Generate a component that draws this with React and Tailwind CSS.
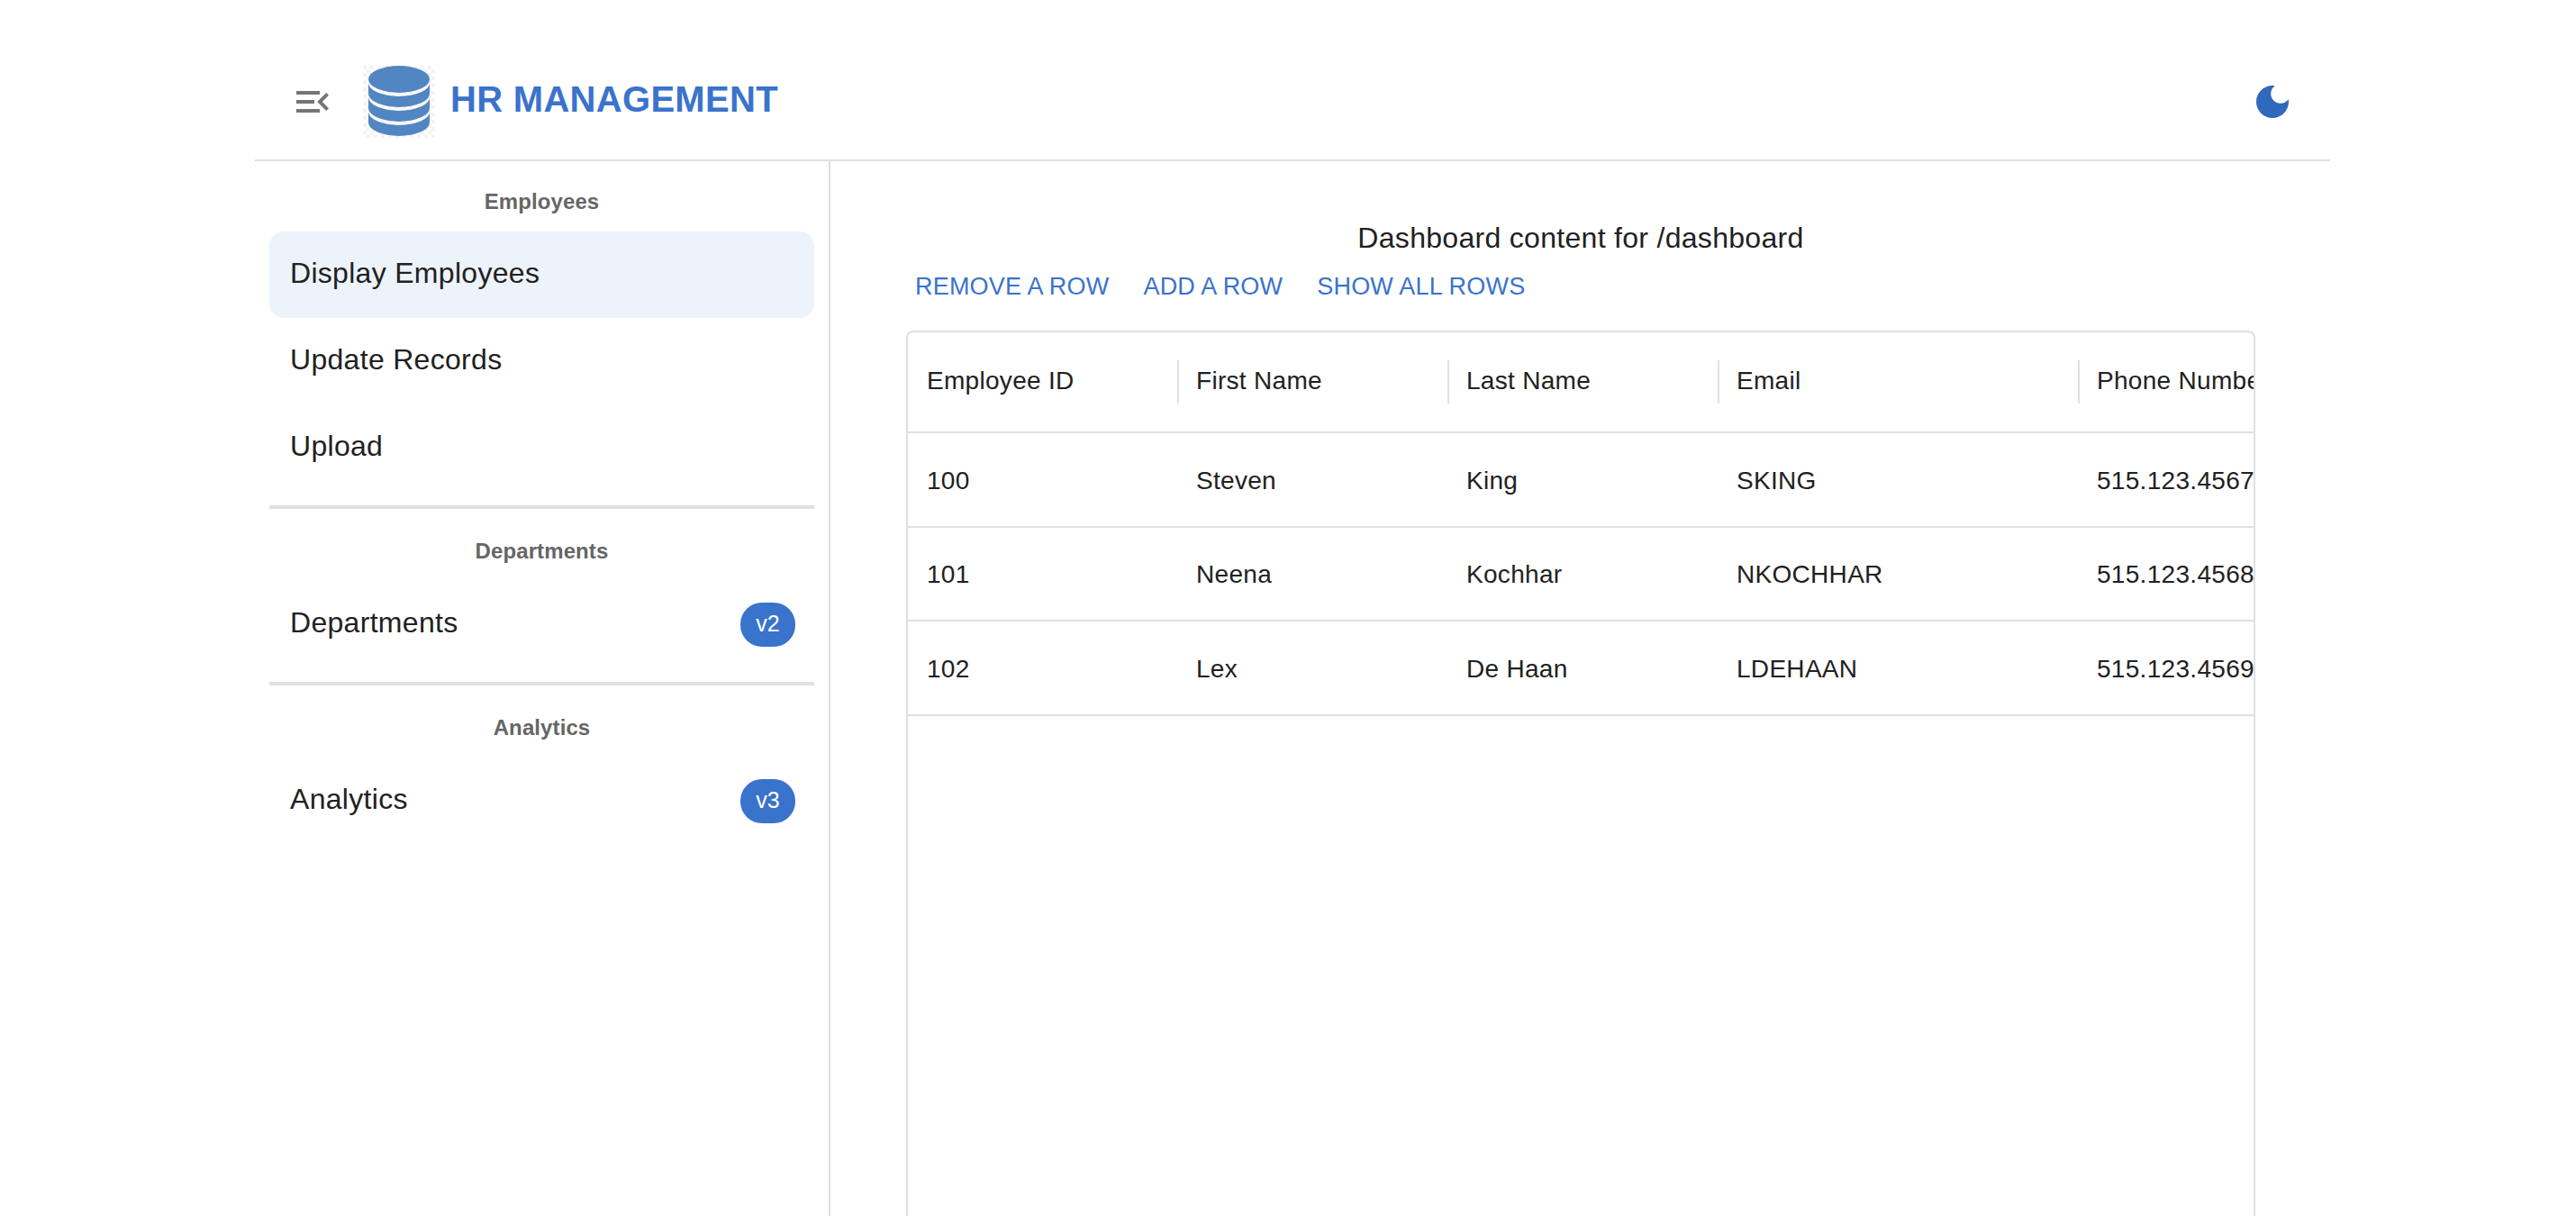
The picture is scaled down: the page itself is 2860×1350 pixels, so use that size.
import React from 'react';

const employees = [
  { id: 100, first: 'Steven', last: 'King', email: 'SKING', phone: '515.123.4567' },
  { id: 101, first: 'Neena', last: 'Kochhar', email: 'NKOCHHAR', phone: '515.123.4568' },
  { id: 102, first: 'Lex', last: 'De Haan', email: 'LDEHAAN', phone: '515.123.4569' },
];

function Logo() {
  const bands = [19, 35, 51];
  return (
    <svg width="80" height="80" viewBox="0 0 80 80" className="shrink-0">
      <defs>
        <pattern id="checker" width="8" height="8" patternUnits="userSpaceOnUse">
          <rect width="8" height="8" fill="#ffffff" />
          <rect width="4" height="4" fill="#f3f3f3" />
          <rect x="4" y="4" width="4" height="4" fill="#f3f3f3" />
        </pattern>
      </defs>
      <rect width="80" height="80" fill="url(#checker)" />
      <ellipse cx="40" cy="15" rx="34" ry="15" fill="#5286c2" />
      {bands.map(y => (
        <path
          key={y}
          d={`M6 ${y}A34 15 0 0 0 74 ${y}V${y + 12}A34 15 0 0 1 6 ${y + 12}Z`}
          fill="#5286c2"
        />
      ))}
    </svg>
  );
}

function Subheader({ children }) {
  return <div className="h-[50px] flex items-center justify-center text-[24px] font-bold tracking-[0.1px] text-[#666666]">{children}</div>;
}

function NavItem({ label, active, chip }) {
  return (
    <div className={`h-[96px] rounded-[16px] pl-[23px] pr-[21px] flex items-center justify-between text-[32px] tracking-[0.3px] text-[#212121] ${active ? 'bg-[#edf3fb]' : ''}`}>
      <span className="mb-[4px]">{label}</span>
      {chip && <span className="w-[61px] h-[49px] rounded-[24px] bg-[#3a73cc] text-white text-[25px] tracking-normal flex items-center justify-center">{chip}</span>}
    </div>
  );
}

export default function App() {
  return (
    <div className="h-screen overflow-hidden bg-white font-['Liberation_Sans',Arial,sans-serif]">
      <div className="w-[2304px] ml-[283px] h-full flex flex-col">
        <header className="h-[179px] shrink-0 border-b-[2px] border-[#e0e0e0] flex items-center pt-[48px] pr-[40px]">
          <svg width="48" height="48" viewBox="0 0 24 24" fill="#757575" className="ml-[40px] mr-[32px] shrink-0">
            <path d="M3 18h13v-2H3v2zm0-5h10v-2H3v2zm0-7v2h13V6H3zm18 9.59L17.42 12 21 8.41 19.59 7l-5 5 5 5L21 15.59z" />
          </svg>
          <Logo />
          <h1 className="ml-[17px] mb-[6px] text-[40px] font-bold tracking-[0.3px] text-[#3a73cc]">HR MANAGEMENT</h1>
          <svg width="48" height="48" viewBox="0 0 24 24" fill="#3068bc" className="ml-auto shrink-0">
            <path d="M12 3c-4.97 0-9 4.03-9 9s4.03 9 9 9 9-4.03 9-9c0-.46-.04-.92-.1-1.36-.98 1.37-2.58 2.26-4.4 2.26-2.98 0-5.4-2.42-5.4-5.4 0-1.81.89-3.42 2.26-4.4-.44-.06-.9-.1-1.36-.1z" />
          </svg>
        </header>
        <div className="flex flex-1 min-h-0">
          <aside className="w-[639px] shrink-0 border-r-[2px] border-[#e0e0e0] px-[16px] pt-[20px]">
            <Subheader>Employees</Subheader>
            <div className="mt-[8px]">
              <NavItem label="Display Employees" active />
              <NavItem label="Update Records" />
              <NavItem label="Upload" />
            </div>
            <div className="mt-[16px] h-[4px] bg-[#e0e0e0]" />
            <div className="mt-[22px]"><Subheader>Departments</Subheader></div>
            <div className="mt-[8px]"><NavItem label="Departments" chip="v2" /></div>
            <div className="mt-[16px] h-[4px] bg-[#e0e0e0]" />
            <div className="mt-[22px]"><Subheader>Analytics</Subheader></div>
            <div className="mt-[8px]"><NavItem label="Analytics" chip="v3" /></div>
          </aside>
          <main className="flex-1 min-w-0 pl-[84px] pr-[83px] pt-[62px] flex flex-col">
            <div className="text-center text-[32px] tracking-[0.3px] leading-[46px] text-[#212121]">Dashboard content for /dashboard</div>
            <div className="flex gap-[38px] mt-[8px] pl-[10px] text-[27px] leading-[46px] text-[#3a73cc] tracking-[0.2px]">
              <span>REMOVE A ROW</span>
              <span>ADD A ROW</span>
              <span>SHOW ALL ROWS</span>
            </div>
            <div className="mt-[26px] flex-1 border-[2px] border-b-0 border-[#e0e0e0] rounded-t-[8px] overflow-hidden text-[28px] tracking-[0.3px] text-[#212121]">
              <div className="flex h-[112px] border-b-[2px] border-[#e0e0e0] items-center">
                <div className="w-[299px] shrink-0 px-[21px] pb-[3px]">Employee ID</div>
                <div className="w-[300px] shrink-0 px-[19px] pb-[3px] border-l-[2px] border-[#e0e0e0] h-[48px] flex items-center">First Name</div>
                <div className="w-[300px] shrink-0 px-[19px] pb-[3px] border-l-[2px] border-[#e0e0e0] h-[48px] flex items-center">Last Name</div>
                <div className="w-[400px] shrink-0 px-[19px] pb-[3px] border-l-[2px] border-[#e0e0e0] h-[48px] flex items-center">Email</div>
                <div className="w-[300px] shrink-0 px-[19px] pb-[3px] border-l-[2px] border-[#e0e0e0] h-[48px] flex items-center whitespace-nowrap">Phone Number</div>
              </div>
              {employees.map(e => (
                <div key={e.id} className="flex h-[104.5px] pt-[3px] border-b-[2px] border-[#e0e0e0] items-center">
                  <div className="w-[299px] shrink-0 px-[21px]">{e.id}</div>
                  <div className="w-[300px] shrink-0 px-[21px]">{e.first}</div>
                  <div className="w-[300px] shrink-0 px-[21px]">{e.last}</div>
                  <div className="w-[400px] shrink-0 px-[21px]">{e.email}</div>
                  <div className="w-[300px] shrink-0 px-[21px] whitespace-nowrap">{e.phone}</div>
                </div>
              ))}
            </div>
          </main>
        </div>
      </div>
    </div>
  );
}
